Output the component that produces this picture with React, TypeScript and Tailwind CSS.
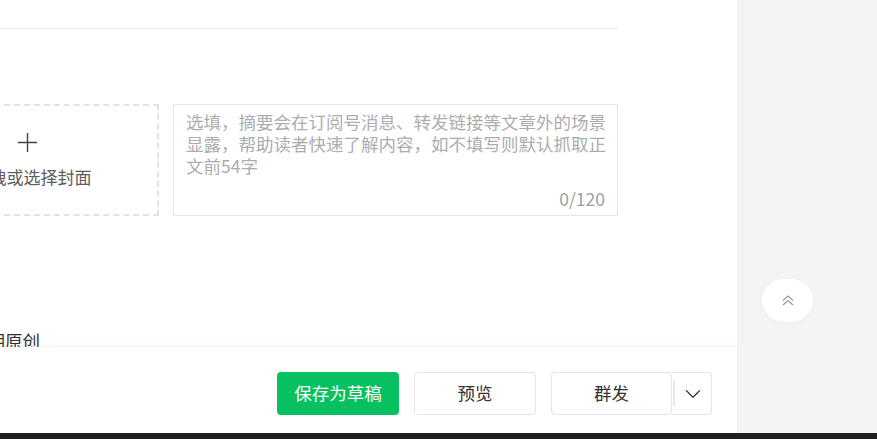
import React from 'react';
import { ChevronDown } from 'lucide-react';

const font = { fontFamily: '"Noto Sans CJK SC", "Noto Sans", sans-serif' };

const CoverPicker: React.FC = () => (
  <div className="flex h-[112px] w-[264px] shrink-0 flex-col items-center justify-center gap-[14px] border-2 border-dashed border-[#e3e3e3]">
    <svg width="19" height="19" viewBox="0 0 19 19" className="text-[#444]">
      <path d="M0 9.5h19M9.5 0v19" stroke="currentColor" strokeWidth="1.4" fill="none" />
    </svg>
    <span className="pl-[10px] text-[17px] leading-[22px] text-[#5d5d5d]">拖拽或选择封面</span>
  </div>
);

const SummaryBox: React.FC = () => (
  <div className="flex h-[112px] w-[445px] flex-col border border-[#e7e7e7] pl-[12px] pr-[6px] pt-[6px] pb-[5px]">
    <p className="flex-1 text-[17.5px] leading-[22px] text-[#adadad]">
      选填，摘要会在订阅号消息、转发链接等文章外的场景显露，帮助读者快速了解内容，如不填写则默认抓取正文前54字
    </p>
    <div className="pr-[6px] text-right text-[17.5px] leading-[22px] text-[#9e9e9e]">0/120</div>
  </div>
);

export default function App() {
  return (
    <div className="flex h-[439px] w-[877px] flex-col overflow-hidden bg-white" style={font}>
      <div className="flex flex-1">
        {/* editor column */}
        <main className="flex w-[737px] shrink-0 flex-col bg-white">
          <div className="h-[347px] overflow-hidden">
            <div className="ml-[-105px] w-[723px]">
              <div className="h-[29px] border-b border-[#ececec]" />
              <div className="mt-[75px] flex gap-[14px]">
                <CoverPicker />
                <SummaryBox />
              </div>
              <div className="ml-[75px] mt-[114px] text-[17.5px] leading-[22px] text-[#333]">声明原创</div>
            </div>
          </div>

          {/* bottom action bar */}
          <div className="relative flex h-[86px] items-start justify-end gap-[15px] bg-white pr-[25px] pt-[25px] shadow-[0_-2px_4px_rgba(0,0,0,0.035)]">
            <button className="h-[43px] w-[122px] rounded-[4px] bg-[#07c160] text-[17.5px] text-white">保存为草稿</button>
            <button className="h-[43px] w-[122px] rounded-[4px] border border-[#e4e4e4] bg-white text-[17.5px] text-[#353535]">预览</button>
            <div className="flex h-[43px]">
              <button className="h-[43px] w-[121px] rounded-[4px] border border-[#e4e4e4] bg-white text-[17.5px] text-[#353535]">群发</button>
              <button className="flex h-[43px] w-[40px] items-center rounded-r-[4px] border border-l-0 border-[#e4e4e4] bg-white">
                <span className="ml-[1px] h-[25px] w-[2px] bg-[#e6e6e6]" />
                <span className="flex flex-1 items-center justify-center">
                  <ChevronDown size={26} strokeWidth={1.1} className="text-[#333]" />
                </span>
              </button>
            </div>
          </div>
        </main>

        {/* right side rail */}
        <aside className="flex-1 bg-[#f4f4f4] pl-[25px] pt-[279px]">
          <button className="flex h-[43px] w-[51px] items-center justify-center rounded-full bg-white shadow-[0_1px_4px_rgba(0,0,0,0.04)]">
            <svg width="12" height="11" viewBox="0 0 12 11" fill="none" className="text-[#9a9a9a]">
              <path d="M1 5.5 6 1l5 4.5M1 10 6 5.5l5 4.5" stroke="currentColor" strokeWidth="1.3" />
            </svg>
          </button>
        </aside>
      </div>
      <div className="h-[6px] bg-[#1f1f1f]" />
    </div>
  );
}
